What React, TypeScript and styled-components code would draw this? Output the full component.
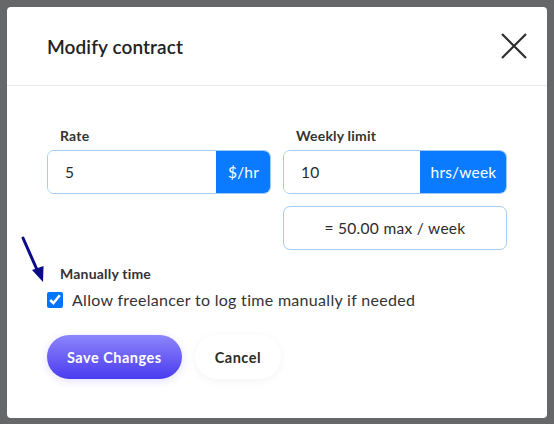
import React from 'react';
import styled, { createGlobalStyle } from 'styled-components';

const GlobalStyle = createGlobalStyle`
  html, body {
    margin: 0;
    padding: 0;
    background: #666769;
  }
  body {
    font-family: Lato, "Noto Sans", sans-serif;
    color: #2b2b2b;
  }
`;

const Backdrop = styled.div`
  position: relative;
  width: 554px;
  height: 424px;
  padding: 7px;
  box-sizing: border-box;
`;

const Modal = styled.div`
  width: 540px;
  height: 411px;
  background: #fff;
  border-radius: 4px;
  display: flex;
  flex-direction: column;
`;

const Header = styled.div`
  height: 78px;
  display: flex;
  align-items: center;
  justify-content: space-between;
  padding: 0 18px 0 40px;
  border-bottom: 1px solid #e9e9e9;
`;

const Title = styled.h2`
  margin: 0;
  font-size: 19px;
  font-weight: 600;
  color: #222;
  letter-spacing: 0.1px;
`;

const CloseButton = styled.button`
  width: 30px;
  height: 30px;
  padding: 0;
  border: none;
  background: none;
  display: flex;
  align-items: center;
  justify-content: center;
  cursor: pointer;
`;

const Body = styled.div`
  padding: 41px 40px 0;
`;

const Grid = styled.div`
  display: grid;
  grid-template-columns: repeat(2, minmax(0, 1fr));
  column-gap: 12px;
`;

const Field = styled.div`
  display: flex;
  flex-direction: column;
  min-width: 0;
`;

const Label = styled.label`
  font-size: 14px;
  font-weight: 700;
  color: #333;
  line-height: 18px;
  letter-spacing: 0.2px;
  padding-left: 13px;
  margin-bottom: 5px;
`;

const InputGroup = styled.div`
  display: flex;
  height: 44px;
  box-sizing: border-box;
  border-radius: 7px;
  overflow: hidden;
  border: 1px solid #a3ccfb;
`;

const Input = styled.input`
  flex: 1;
  width: 0;
  min-width: 0;
  border: none;
  outline: none;
  padding: 0 17px;
  font-family: inherit;
  font-size: 15.5px;
  letter-spacing: 0.3px;
  color: #2b2b2b;
  background: #fff;
`;

const Addon = styled.span<{ $width: number }>`
  width: ${(p) => p.$width}px;
  flex-shrink: 0;
  margin: -1px -1px -1px 0;
  display: flex;
  align-items: center;
  justify-content: center;
  background: #0a7bff;
  color: #fff;
  font-size: 15.5px;
  letter-spacing: 0.2px;
`;

const Summary = styled.div`
  grid-column: 2;
  margin-top: 12px;
  height: 44px;
  box-sizing: border-box;
  border: 1px solid #a3ccfb;
  border-radius: 7px;
  display: flex;
  align-items: center;
  justify-content: center;
  font-size: 15.5px;
  letter-spacing: 0.3px;
  color: #2b2b2b;
`;

const Section = styled.div`
  margin-top: 15px;
  display: flex;
  flex-direction: column;
`;

const CheckRow = styled.label`
  display: flex;
  align-items: center;
  gap: 9px;
  font-size: 16px;
  letter-spacing: 0.3px;
  color: #333;
  margin-top: 2px;
`;

const Checkbox = styled.input`
  width: 16px;
  height: 16px;
  margin: 0;
  accent-color: #0075ff;
`;

const Actions = styled.div`
  display: flex;
  gap: 13px;
  margin-top: 26px;
`;

const Button = styled.button<{ $primary?: boolean }>`
  height: 44px;
  padding: 0 20px;
  border: none;
  border-radius: 22px;
  font-family: inherit;
  font-size: 14.5px;
  font-weight: 700;
  letter-spacing: 0.5px;
  cursor: pointer;
  color: ${(p) => (p.$primary ? '#fff' : '#2b2b2b')};
  background: ${(p) =>
    p.$primary ? 'linear-gradient(180deg, #8c86fb 0%, #4b3bf0 100%)' : '#fff'};
  box-shadow: ${(p) =>
    p.$primary ? '0 2px 8px rgba(90, 80, 240, 0.18)' : '0 2px 10px rgba(0, 0, 0, 0.05)'};
`;

const Pointer = styled.svg`
  position: absolute;
  left: 18px;
  top: 234px;
`;

const App: React.FC = () => {
  return (
    <>
      <GlobalStyle />
      <Backdrop>
        <Modal>
          <Header>
            <Title>Modify contract</Title>
            <CloseButton aria-label="Close">
              <svg width="26" height="26" viewBox="0 0 26 26">
                <path d="M1 1 L25 25 M25 1 L1 25" stroke="#2d2d2d" strokeWidth="2.2" />
              </svg>
            </CloseButton>
          </Header>
          <Body>
            <Grid>
              <Field>
                <Label>Rate</Label>
                <InputGroup>
                  <Input defaultValue="5" />
                  <Addon $width={55}>$/hr</Addon>
                </InputGroup>
              </Field>
              <Field>
                <Label>Weekly limit</Label>
                <InputGroup>
                  <Input defaultValue="10" />
                  <Addon $width={87}>hrs/week</Addon>
                </InputGroup>
              </Field>
              <Summary>= 50.00 max / week</Summary>
            </Grid>
            <Section>
              <Label>Manually time</Label>
              <CheckRow>
                <Checkbox type="checkbox" defaultChecked />
                Allow freelancer to log time manually if needed
              </CheckRow>
            </Section>
            <Actions>
              <Button $primary>Save Changes</Button>
              <Button>Cancel</Button>
            </Actions>
          </Body>
        </Modal>
        <Pointer width="30" height="52" viewBox="0 0 30 52">
          <path d="M5 4 L20 38" stroke="#0b0b8a" strokeWidth="3" strokeLinecap="round" />
          <path d="M14 36 L25 48 L25.5 32 Z" fill="#0b0b8a" />
        </Pointer>
      </Backdrop>
    </>
  );
};

export default App;
